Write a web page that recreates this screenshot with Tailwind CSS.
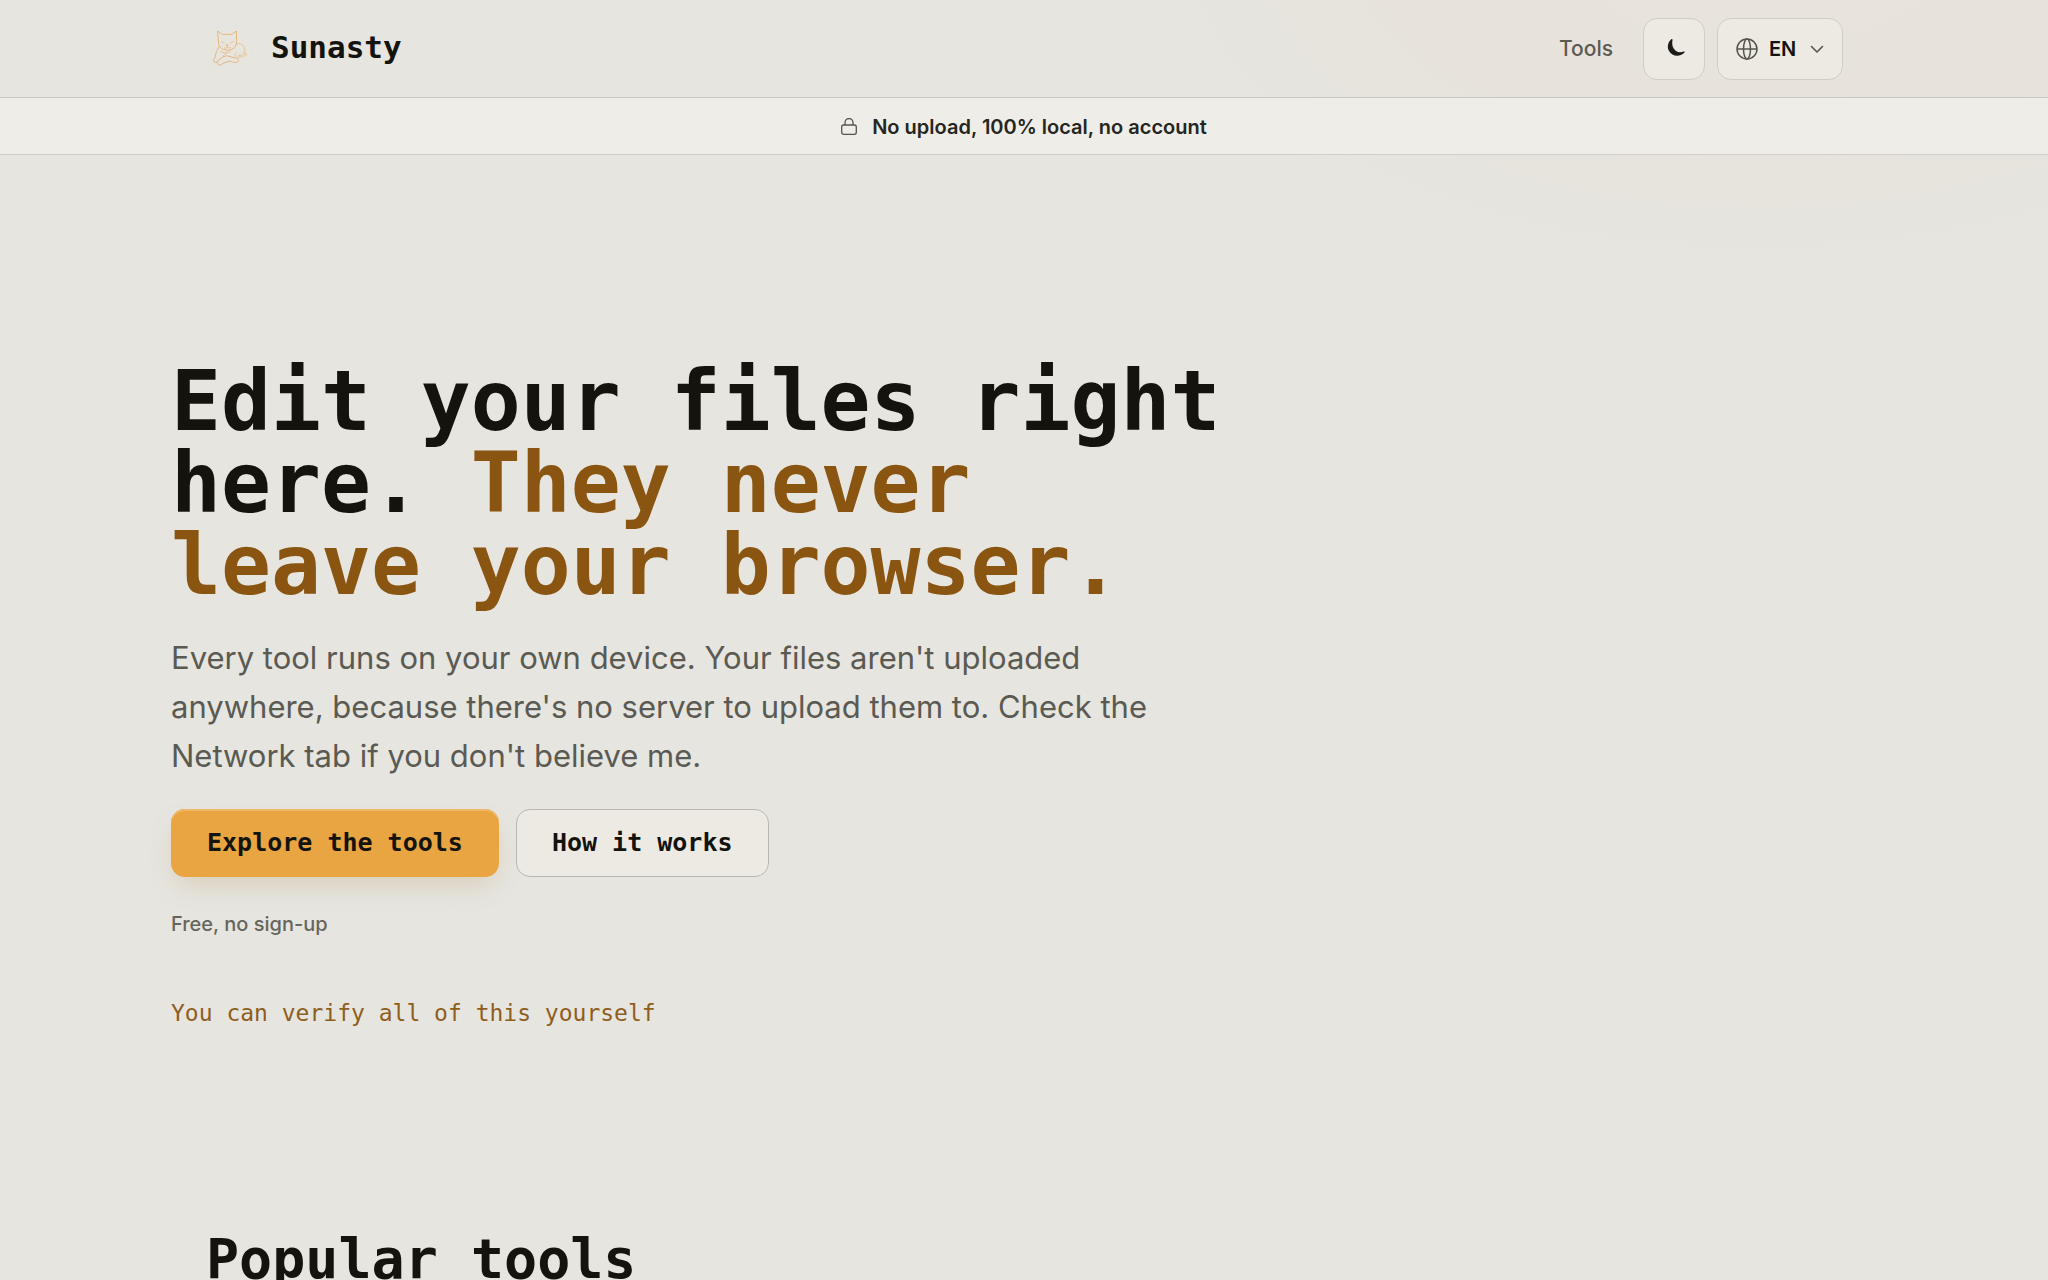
<!DOCTYPE html>
<html lang="en">
<head>
<meta charset="utf-8">
<meta name="viewport" content="width=device-width, initial-scale=1">
<title>Sunasty</title>
<script src="https://cdn.jsdelivr.net/npm/@tailwindcss/browser@4"></script>
</head>
<body class="min-h-screen bg-[#e6e5e0] bg-[radial-gradient(ellipse_640px_340px_at_86%_-60px,#e8e3dc_0%,#e7e3dc_60%,#e6e5e0_100%)] bg-no-repeat font-['Inter',sans-serif] text-[#14130d]">

<header class="border-b border-[#c9c8c3]">
  <div class="mx-auto flex h-[97px] max-w-[1706px] items-center justify-between pr-[34px] pl-[38px]">
    <a href="#" class="flex items-center gap-[18px] pb-1">
      <svg class="h-11 w-11 drop-shadow-[0_0_8px_#f3e6d0]" viewBox="58 47 132 132" fill="none" stroke="#e3b77c" stroke-width="3" stroke-linecap="round" stroke-linejoin="round" aria-hidden="true">
        <path d="M86 94 84 65 98 76Q112 73 125 76L140 65 141 94Q141 122 113 123 84 121 86 94Z"/>
        <path d="M95 97l8 3M132 97l-9 3M110 106h6l-3 4zM113 110v4M104 116q5 3 9-2 5 5 10 1" stroke-width="2"/>
        <path d="M88 112Q78 126 76 144 70 151 73 158 78 161 84 157M83 156Q80 165 87 167 95 168 100 162L121 155Q138 163 145 157 150 151 142 147L110 139Q96 143 86 153"/>
        <path d="M139 105Q154 97 163 113 168 123 163 132M163 132Q172 129 170 137 160 145 143 144M92 127Q105 135 122 127M100 139l12-9M140 129q-6 5-4 12M146 139q12 2 17-7" stroke-width="2"/>
      </svg>
      <span class="font-['DejaVu_Sans_Mono',monospace] text-[31px] leading-10 font-bold">Sunasty</span>
    </a>
    <nav class="flex items-center gap-3">
      <a href="#tools" class="mr-[18px] text-[21px] leading-7 font-medium text-[#5b5a52]">Tools</a>
      <button type="button" aria-label="Switch to dark theme" class="flex size-[62px] items-center justify-center rounded-[14px] border border-[#cfcdc6] bg-[#edeae4]">
        <svg class="ml-1 size-5 -translate-y-px" viewBox="0 0 20 20" fill="#1c1b16" aria-hidden="true"><path d="M5.500 1C2 4 .700 9 3 13c3 5 10 7 15.500 1.500.500-.700 0-1.300-.800-1-4.500 1.500-8 .300-10-3C6 8 6 5 6.500 2c.100-.800-.400-1.300-1-1z"/></svg>
      </button>
      <label class="flex h-[62px] items-center rounded-[14px] border border-[#cfcdc6] bg-[#edeae4] px-[18px]">
        <svg class="size-[22px]" viewBox="0 0 22 22" fill="none" stroke="#55544c" stroke-width="1.500" aria-hidden="true"><circle cx="11" cy="11" r="10"/><ellipse cx="11" cy="11" rx="3.500" ry="10"/><path d="M1 11h20"/></svg>
        <select aria-label="Language" class="mx-[11px] w-[30px] appearance-none bg-transparent text-[20px] leading-7 font-semibold"><option>EN</option></select>
        <svg class="h-[14px] w-[14px]" viewBox="0 0 14 14" fill="none" stroke="#55544c" stroke-width="1.600" stroke-linecap="round" stroke-linejoin="round" aria-hidden="true"><path d="M1.500 4.500 7 10l5.500-5.500"/></svg>
      </label>
    </nav>
  </div>
</header>

<p class="flex h-[57px] items-center justify-center gap-[15px] border-b border-[#cfcec8] bg-[#eeede8] pt-px text-[20px] leading-7 font-semibold text-[#26251f]">
  <svg class="h-[17px] w-4" viewBox="0 0 16 17" fill="none" stroke="#55544c" stroke-width="1.300" aria-hidden="true"><rect x=".7" y="7" width="14.600" height="9.300" rx="2"/><path d="M4 7V4.500a4 4 0 0 1 8 0V7"/></svg>
  No upload, 100% local, no account
</p>

<main class="mx-auto max-w-[1706px]">
  <section class="pt-[206px]">
    <h1 class="max-w-[1080px] font-['DejaVu_Sans_Mono',monospace] text-[83px] leading-[82px] font-bold">Edit your files right here. <span class="text-[#8a5511]">They never leave your browser.</span></h1>
    <p class="mt-[26px] max-w-[990px] text-[31px] leading-[49px] text-[#5b5a52]">Every tool runs on your own device. Your files aren't uploaded anywhere, because there's no server to upload them to. Check the Network tab if you don't believe me.</p>
    <div class="mt-[29px] flex gap-[17px] font-['DejaVu_Sans_Mono',monospace] text-[25px] leading-8 font-bold">
      <a href="#tools" class="flex h-[68px] items-center rounded-[14px] bg-[#e8a542] px-9 shadow-[inset_0_2px_0_#efb867,0_12px_28px_-6px_#d8cbb5]">Explore the tools</a>
      <a href="#how" class="flex h-[68px] items-center rounded-[14px] border border-[#b9b8b0] bg-[#edeae3] px-[35px]">How it works</a>
    </div>
    <p class="mt-[33px] text-[20px] leading-7 font-medium text-[#66655d]">Free, no sign-up</p>
    <a href="#verify" class="mt-[59px] inline-block font-['DejaVu_Sans_Mono',monospace] text-[23px] leading-8 text-[#8f5d1c]">You can verify all of this yourself</a>
  </section>
  <section id="tools" class="px-[35px] pt-[200px] pb-16">
    <h2 class="font-['DejaVu_Sans_Mono',monospace] text-[55px] leading-[60px] font-bold">Popular tools</h2>
  </section>
</main>
</body>
</html>
